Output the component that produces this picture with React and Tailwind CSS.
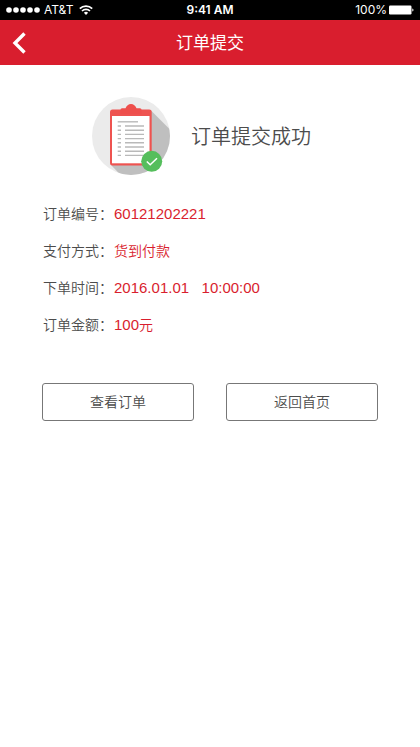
const details = [
  { label: '订单编号：', value: '60121202221' },
  { label: '支付方式：', text: '货到付款' },
  { label: '下单时间：', value: '2016.01.01   10:00:00' },
  { label: '订单金额：', value: '100', text: '元' },
];

const lineRows = [29, 33.2, 37.4, 41.6, 45.8, 50, 54.2, 58.4];

function StatusBar() {
  return (
    <div className="grid h-5 grid-cols-3 items-center bg-black px-1.5 text-xs text-white">
      <div className="flex items-center gap-1">
        <svg width="34" height="6" viewBox="0 0 34 6" fill="currentColor" aria-hidden="true">
          {[3, 10, 17, 24, 31].map((x) => (
            <circle key={x} cx={x} cy="3" r="2.8" />
          ))}
        </svg>
        <span>AT&amp;T</span>
        <svg className="ml-0.5" width="14" height="10" viewBox="0 0 14 10" fill="none" stroke="currentColor" strokeWidth="1.7" aria-hidden="true">
          <path d="M0.8 3.6a8.8 8.8 0 0 1 12.4 0" />
          <path d="M3 6a5.7 5.7 0 0 1 8 0" />
          <path d="M7 10 4.9 7.8a3 3 0 0 1 4.2 0z" fill="currentColor" stroke="none" />
        </svg>
      </div>
      <span className="text-center font-semibold">9:41 AM</span>
      <div className="flex items-center justify-end gap-0.5">
        <span>100%</span>
        <svg width="25" height="10" viewBox="0 0 25 10" fill="currentColor" aria-hidden="true">
          <rect y="0.5" width="22.5" height="9" rx="1.2" />
          <path d="M23.3 3.4c1.6.4 1.6 2.8 0 3.2z" />
        </svg>
      </div>
    </div>
  );
}

function ClipboardIcon() {
  return (
    <svg className="shrink-0" width="78" height="78" viewBox="0 0 78 78" aria-hidden="true">
      <defs>
        <clipPath id="disc">
          <circle cx="39" cy="39" r="39" />
        </clipPath>
      </defs>
      <circle cx="39" cy="39" r="39" fill="#ebebeb" />
      <path d="M59 13.5 84 38.5V84H34.5L19 68z" fill="#bfbfbf" clipPath="url(#disc)" />
      <rect x="18" y="12.5" width="41.7" height="56" rx="2.5" fill="#ee5350" />
      <path d="M28.5 17v-4.2q0-1.5 1.5-1.5h3.5C34.5 8.7 36.5 7 39 7s4.5 1.7 5.5 4.3H48q1.5 0 1.5 1.5V17z" fill="#ee4f4c" />
      <rect x="20" y="19" width="37.5" height="47.3" fill="#fff" />
      <g stroke="#b9b9b9" strokeWidth="1.4">
        <path d="M25.7 24.8H46" />
        {lineRows.map((y) => (
          <path key={y} d={`M25.7 ${y}h3.3M33 ${y}h19`} />
        ))}
      </g>
      <circle cx="59.7" cy="64.3" r="10.5" fill="#55be5c" />
      <path d="m54.8 64.5 3.4 3.3 6.8-6.6" fill="none" stroke="#fff" strokeWidth="1.5" />
    </svg>
  );
}

export default function App() {
  return (
    <div className="min-h-screen bg-white font-[Inter,'Noto_Sans_CJK_SC',sans-serif] text-[#4c4c4c]">
      <StatusBar />
      <header className="grid h-[45px] grid-cols-3 items-center bg-[#d91e2e] px-3 text-white">
        <button type="button" aria-label="返回" className="justify-self-start">
          <svg width="14" height="22" viewBox="0 0 14 22" fill="none" stroke="currentColor" strokeWidth="3.4" aria-hidden="true">
            <path d="M12.5 1.5 3 11l9.5 9.5" />
          </svg>
        </button>
        <h1 className="text-center text-[17px] leading-6 font-normal">订单提交</h1>
      </header>

      <main className="font-[350]">
        <section className="flex items-center justify-center gap-[21px] pt-8 pr-[17px]">
          <ClipboardIcon />
          <h2 className="pt-0.5 text-xl leading-7 font-[350]">订单提交成功</h2>
        </section>

        <dl className="grid gap-4 px-[43px] pt-7 text-sm leading-[21px]">
          {details.map((item) => (
            <div key={item.label} className="flex">
              <dt className="w-[71px] shrink-0">{item.label}</dt>
              <dd className="flex items-baseline text-[#d91e2e]">
                {item.value && (
                  <span className="font-['Liberation_Sans',Arial,sans-serif] text-[15px] whitespace-pre">{item.value}</span>
                )}
                {item.text && <span>{item.text}</span>}
              </dd>
            </div>
          ))}
        </dl>

        <div className="grid grid-cols-2 gap-8 px-[42px] pt-12">
          <button type="button" className="h-[38px] rounded-[3px] border border-[#777] text-sm">
            查看订单
          </button>
          <button type="button" className="h-[38px] rounded-[3px] border border-[#777] text-sm">
            返回首页
          </button>
        </div>
      </main>
    </div>
  );
}
